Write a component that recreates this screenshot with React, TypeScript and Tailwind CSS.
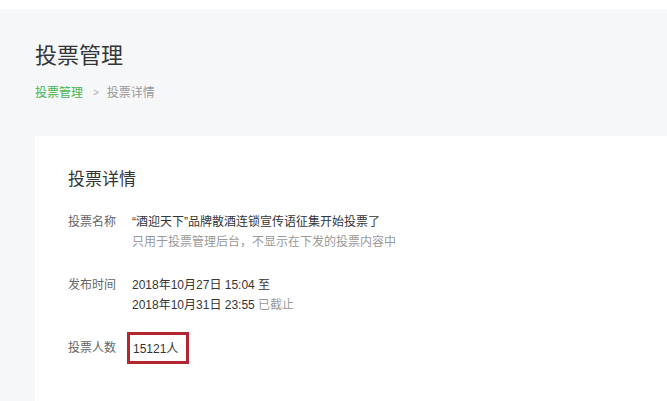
import React from 'react';

const font = { fontFamily: '"Liberation Sans", "Noto Sans CJK SC", sans-serif' };

function Row({ label, children }: { label: string; children: React.ReactNode }) {
  return (
    <div className="flex text-[12px] leading-[20px]">
      <div className="w-[64px] shrink-0 text-[#666]">{label}</div>
      <div className="text-[#353535]">{children}</div>
    </div>
  );
}

export default function App() {
  return (
    <div className="w-[667px] h-[401px] overflow-hidden bg-white" style={font}>
      <div className="mt-[9px] h-[392px] bg-[#f6f7f9] pl-[35px] pt-[32px] flex flex-col">
        <h1 className="text-[22px] leading-[30px] text-[#353535] font-normal">投票管理</h1>
        <div className="mt-[14px] flex items-center text-[12px] leading-[16px]">
          <span className="text-[#44b549]">投票管理</span>
          <span className="ml-[10px] mr-[8px] text-[#aaa] text-[10px]">&gt;</span>
          <span className="text-[#999]">投票详情</span>
        </div>
        <div className="mt-[35px] flex-1 bg-white pl-[33px] pt-[32px]">
          <h2 className="text-[17px] leading-[24px] text-[#353535] font-normal">投票详情</h2>
          <div className="mt-[20px] flex flex-col gap-[23px]">
            <Row label="投票名称">
              <div>“酒迎天下”品牌散酒连锁宣传语征集开始投票了</div>
              <div className="text-[#999]">只用于投票管理后台，不显示在下发的投票内容中</div>
            </Row>
            <Row label="发布时间">
              <div>2018年10月27日 15:04 至</div>
              <div>
                2018年10月31日 23:55 <span className="text-[#999]">已截止</span>
              </div>
            </Row>
            <div className="flex items-center text-[12px] leading-[20px] -mt-[6px]">
              <div className="w-[59px] shrink-0 text-[#666]">投票人数</div>
              <div className="border-[3px] border-[#b3262f] w-[62px] h-[32px] pl-[3px] pt-[2px] flex items-center text-[#353535]">
                15121人
              </div>
            </div>
          </div>
        </div>
      </div>
    </div>
  );
}
